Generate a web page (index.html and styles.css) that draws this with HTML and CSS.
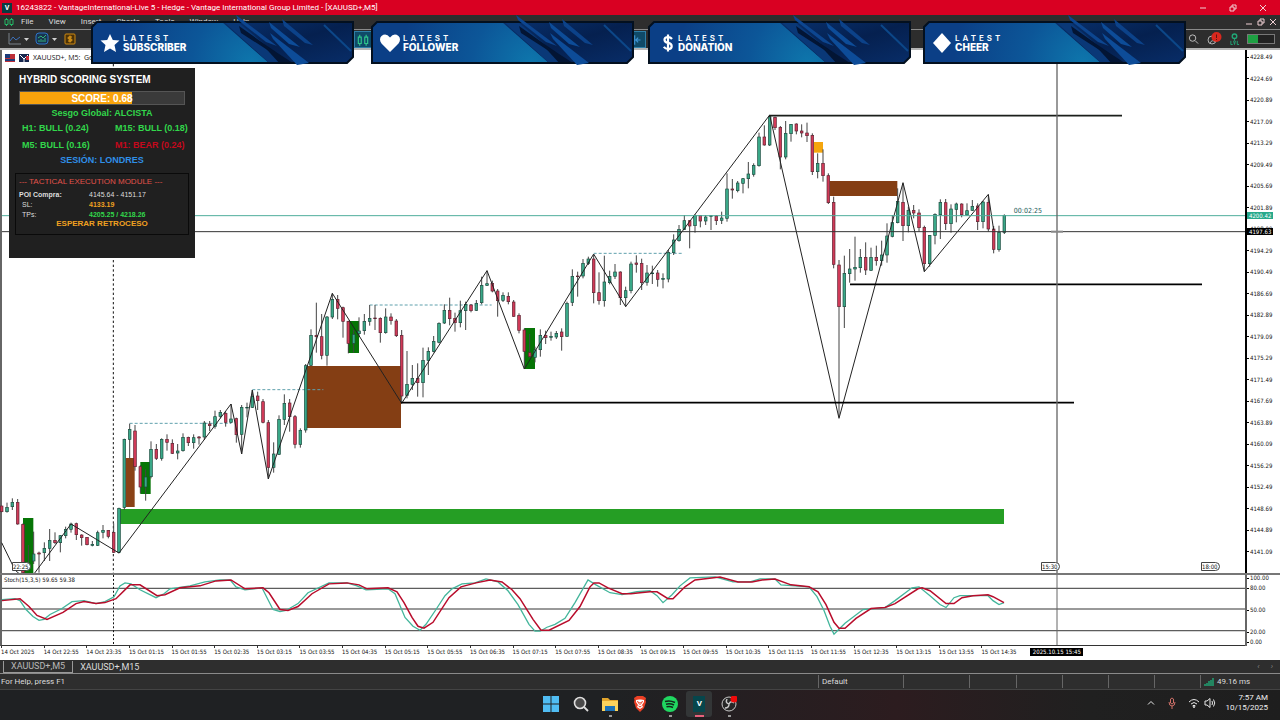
FILE: index.html
```html
<!DOCTYPE html>
<html lang="en">
<head>
    <meta charset="UTF-8">
    <meta name="viewport" content="width=device-width, initial-scale=1.0">
    <title>XAUUSD+,M5</title>
    <link rel="stylesheet" href="styles.css">
</head>
<body>
    <!-- shared shapes -->
    <svg class="defs" aria-hidden="true">
        <defs>
            <radialGradient id="bannerBlue" gradientUnits="userSpaceOnUse" cx="160" cy="48" r="130">
                <stop offset="0" stop-color="#0e76ac"/>
                <stop offset="0.45" stop-color="#0c5698"/>
                <stop offset="1" stop-color="#0b3f86"/>
            </radialGradient>
            <linearGradient id="bannerDark" x1="0" y1="0" x2="1" y2="1">
                <stop offset="0" stop-color="#08306c"/>
                <stop offset="0.5" stop-color="#05204f"/>
                <stop offset="1" stop-color="#082d68"/>
            </linearGradient>
            <clipPath id="bannerClip"><path d="M7 8H261V42L256 47H2V13Z"/></clipPath>
        </defs>
        <symbol id="banner" viewBox="0 0 263 50">
            <path d="M6 7H262V42L256 48H1V12Z" fill="url(#bannerBlue)"/>
            <g clip-path="url(#bannerClip)">
                <path d="M131 7H263V48H178Z" fill="url(#bannerDark)"/>
                <path d="M133 7H147L196 48H178Z" fill="#0a3877"/>
                <path d="M148 11L186 38L178 36L150 18Z" fill="#031534"/>
                <path d="M168 26L205 50H190Z" fill="#031534"/>
                <path d="M233 10L260 36" stroke="#0c4788" stroke-width="2"/>
            </g>
            <path d="M6 7H262V42L256 48H1V12Z" fill="none" stroke="#03101f" stroke-width="2"/>
            <path d="M145 0L186 31L175 27L147 5Z" fill="#0d4690"/>
            <path d="M178 7L209 32L198 29L180 13Z" fill="#0d4c98"/>
            <path d="M191 4L222 30L214 28L193 11Z" fill="#0c4289"/>
            <path d="M179 18L218 48L206 50L182 24Z" fill="#0d4c98"/>
        </symbol>
    </svg>

    <header class="titlebar">
        <span class="app-mark">V</span>
        <h1>16243822 - VantageInternational-Live 5 - Hedge - Vantage International Group Limited - [XAUUSD+,M5]</h1>
        <div class="window-buttons">
            <button aria-label="Minimize"><svg viewBox="0 0 8 8"><path d="M1 4H7"/></svg></button>
            <button aria-label="Restore"><svg viewBox="0 0 8 8"><path d="M1 3H5V7H1ZM3 3V1H7V5H5"/></svg></button>
            <button aria-label="Close"><svg viewBox="0 0 8 8"><path d="M1 1L7 7M7 1L1 7"/></svg></button>
        </div>
    </header>

    <nav class="menubar">
        <svg class="candle-icon" viewBox="0 0 10 10"><path d="M1 2.500H4V7.500H1ZM2.500 1V2.500M2.500 7.500V9M6 2.500H9V7.500H6ZM7.500 1V2.500M7.500 7.500V9"/></svg>
        <button>File</button>
        <button>View</button>
        <button>Insert</button>
        <button>Charts</button>
        <button>Tools</button>
        <button>Window</button>
        <button>Help</button>
        <div class="window-buttons small">
            <button aria-label="Minimize chart"><svg viewBox="0 0 8 8"><path d="M1 6H7"/></svg></button>
            <button aria-label="Restore chart"><svg viewBox="0 0 8 8"><path d="M1 3H5V7H1ZM3 3V1H7V5H5"/></svg></button>
            <button aria-label="Close chart"><svg viewBox="0 0 8 8"><path d="M1 1L7 7M7 1L1 7"/></svg></button>
        </div>
    </nav>

    <div class="toolbar">
        <div class="tools-left">
            <button aria-label="Chart type"><svg class="w20" viewBox="0 0 22 14"><g fill="none"><path d="M2 1V12H14" stroke="#7a828a"/><path d="M3 9L6 5L9 8L13 5" stroke="#3d70b8"/></g><path d="M17 6H22L19.500 9Z" fill="#d0d0d0"/></svg></button>
            <button aria-label="Indicators"><svg class="w20" viewBox="0 0 22 14"><rect x="1" y="1" width="12" height="11" rx="3" fill="#17334f" stroke="#2e74c8"/><path d="M3 6L6 4L8 6L11 3M4 10V8M6 10V7M8 10V8M10 10V6" stroke="#34b37c" fill="none"/><path d="M17 6H22L19.500 9Z" fill="#d0d0d0"/></svg></button>
            <button aria-label="Trade"><svg class="w14" viewBox="0 0 14 14"><rect x="2" y="2" width="10" height="10" rx="1" fill="#4b3208" stroke="#d08a10"/><path d="M9 5H6Q5 5 5 6T6 7H8Q9 7 9 8T8 9H5M7 3.500V10.500" stroke="#f0a51c" fill="none"/></svg></button>
        </div>
        <button class="tool-on on-candles" aria-label="Candlesticks"><svg viewBox="0 0 10 12"><path d="M1 3.500H3.500V9H1ZM2.200 1.500V3.500M2.200 9V11M6.500 3.500H9V9H6.500ZM7.700 1.500V3.500M7.700 9V11" stroke="#2fc58b" fill="none"/></svg></button>
        <button class="tool-on on-shift" aria-label="Chart shift"><svg viewBox="0 0 10 12"><path d="M3 2V10M3 6H8M6 4L4 6L6 8" stroke="#3f94d4" fill="none"/></svg></button>
        <div class="tools-right">
            <button aria-label="Search"><svg viewBox="0 0 12 12"><circle cx="5" cy="5" r="3.500" fill="none" stroke="#c8c8c8"/><path d="M8 8L11 11" stroke="#c8c8c8"/></svg></button>
            <button aria-label="Notifications"><svg class="w16" viewBox="0 0 16 14"><circle cx="6" cy="8" r="4" fill="none" stroke="#b0b0b0"/><path d="M4 11Q6 7 9 10" stroke="#b0b0b0" fill="none"/><circle cx="10.500" cy="5" r="5" fill="#d9281e"/><path d="M10.500 2.500V6M10.500 7V8" stroke="#5d1512"/></svg></button>
            <button aria-label="Level"><svg viewBox="0 0 12 14"><circle cx="6" cy="4" r="2.500" fill="none" stroke="#21a777" stroke-width="1.500"/><path d="M6 6V9M2 9V13H4M5 9L6 13L7 9M9 9V13H11" stroke="#21a777" fill="none"/></svg></button>
            <span class="level"><i></i></span>
        </div>
    </div>

    <main class="workspace">
        <section class="price-row">
            <div class="plot">
                <svg id="price" class="plot-svg" viewBox="0 150 3735 1569" preserveAspectRatio="none"></svg>
                <div class="chart-title">
                    <svg viewBox="0 0 24 8"><path d="M0 0H10V8H0Z" fill="#bd2f38"/><path d="M0 0H5V4H0Z" fill="#1c3b79"/><path d="M0 6H10" stroke="#1c3b79" stroke-width="2"/><path d="M14 0H24V8H14Z" fill="#17264e"/><path d="M15 1L19 5L23 1M19 5V8" stroke="#fff" fill="none"/><path d="M21 2H24V6H21Z" fill="#c82f3a"/></svg>
                    <span>XAUUSD+, M5:&nbsp; Gold vs US Dollar</span>
                </div>
                <span class="countdown">00:02:25</span>
                <span class="flag f1">22:25</span>
                <span class="flag f2">15:30</span>
                <span class="flag f3">18:00</span>

                <aside class="score-panel">
                    <h2>HYBRID SCORING SYSTEM</h2>
                    <div class="score-bar"><div class="score-fill"></div><span>SCORE: 0.68</span></div>
                    <p class="bias">Sesgo Global: ALCISTA</p>
                    <div class="frames">
                        <span>H1: BULL (0.24)</span><span>M15: BULL (0.18)</span>
                        <span>M5: BULL (0.16)</span><span class="bear">M1: BEAR (0.24)</span>
                    </div>
                    <p class="session">SESIÓN: LONDRES</p>
                    <div class="module">
                        <h3>--- TACTICAL EXECUTION MODULE ---</h3>
                        <dl>
                            <dt class="poi">POI Compra:</dt><dd>4145.64 - 4151.17</dd>
                            <dt>SL:</dt><dd class="sl">4133.19</dd>
                            <dt>TPs:</dt><dd class="tp">4205.25 / 4218.26</dd>
                        </dl>
                        <p class="wait">ESPERAR RETROCESO</p>
                    </div>
                </aside>
            </div>
            <div class="price-axis">
                <ol id="priceLabels"></ol>
                <span class="tag bid">4200.42</span>
                <span class="tag cursor">4197.63</span>
            </div>
        </section>

        <section class="stoch-row">
            <div class="plot">
                <svg id="stoch" class="plot-svg" viewBox="0 575 1245 71" preserveAspectRatio="none"></svg>
                <span class="stoch-title">Stoch(15,3,5) 59.65 59.38</span>
            </div>
            <div class="stoch-axis">
                <span class="l100">100.00</span><span class="l80">80.00</span><span class="l50">50.00</span><span class="l20">20.00</span><span class="l0">0.00</span>
            </div>
        </section>

        <div class="time-row">
            <ol id="timeLabels"></ol>
            <span class="time-tag">2025.10.15 15:45</span>
        </div>
    </main>

    <div class="tabs">
        <button class="tab active">XAUUSD+,M5</button>
        <button class="tab">XAUUSD+,M15</button>
        <span class="tab-arrows"><i>‹</i><i>›</i></span>
    </div>

    <footer class="statusbar">
        <span class="help">For Help, press F1</span>
        <span class="cell c1">Default</span>
        <span class="cell c2"></span>
        <span class="cell c3"></span>
        <span class="cell c4"></span>
        <span class="cell c4"></span>
        <span class="cell c4"></span>
        <span class="cell c4"></span>
        <span class="cell c5"><svg viewBox="0 0 10 8"><path d="M1 8V6M3 8V5M5 8V3M7 8V2M9 8V0" stroke="#20a273" stroke-width="1.500"/></svg>49.16 ms</span>
    </footer>

    <div class="taskbar">
        <div class="apps">
            <button aria-label="Start"><svg viewBox="0 0 16 16"><path d="M0 0H7.500V7.500H0ZM8.500 0H16V7.500H8.500ZM0 8.500H7.500V16H0ZM8.500 8.500H16V16H8.500Z" fill="#50bdf3"/></svg></button>
            <button aria-label="Search"><svg viewBox="0 0 16 16"><circle cx="7" cy="7" r="5.500" fill="#4a4a4a" stroke="#dedede" stroke-width="1.600"/><path d="M11 11L15 15" stroke="#dedede" stroke-width="1.800"/></svg></button>
            <button aria-label="Files" class="open"><svg viewBox="0 0 16 16"><path d="M0 2H6L8 4H16V14H0Z" fill="#e2a52c"/><path d="M0 5H16V15H0Z" fill="#fbd25c"/><path d="M3 10H13V15H3Z" fill="#1b72b8"/></svg></button>
            <button aria-label="Brave"><svg viewBox="0 0 16 16"><path d="M5 0H11L14 2L13.500 4L14 6L12 12L8 16L4 12L2 6L2.500 4L2 2Z" fill="#ec4025"/><path d="M4 4L7 3.500H9L12 4L12 6L10 9L11 11L8 13L5 11L6 9L4 6Z" fill="#fff"/><path d="M5 5.500L7 6.500L6.500 7.500M11 5.500L9 6.500L9.500 7.500M8 6V9M6.500 10L8 11L9.500 10" stroke="#ec4025" fill="none"/></svg></button>
            <button aria-label="Music" class="open"><svg viewBox="0 0 16 16"><circle cx="8" cy="8" r="8" fill="#20d761"/><path d="M3 5.500Q8 4 13 6.500M4 8.200Q8 7 12 9M4.500 10.800Q8 9.800 11 11.500" stroke="#12291b" stroke-width="1.500" fill="none"/></svg></button>
            <button aria-label="Vantage" class="current"><span>V</span></button>
            <button aria-label="Recorder" class="open"><svg viewBox="0 0 16 16"><circle cx="8" cy="8" r="7" fill="#262626" stroke="#c9c9c9"/><path d="M8 8Q4 7 6 3M8 8Q10 4 13 7M8 8Q8 12 4 12" stroke="#c9c9c9" stroke-width="1.500" fill="none"/><circle cx="13" cy="3" r="3.500" fill="#f00a0a"/></svg></button>
        </div>
        <div class="tray">
            <svg class="chev" viewBox="0 0 8 8"><path d="M1 5.500L4 2.500L7 5.500" stroke="#e8e8e8" fill="none"/></svg>
            <svg class="mic" viewBox="0 0 8 12"><path d="M2.500 2Q4 0 5.500 2V6Q4 8 2.500 6ZM1 5Q1 9 4 9T7 5M4 9V12" stroke="#cf7068" fill="none"/></svg>
            <svg class="wifi" viewBox="0 0 12 12"><path d="M1 5Q6 0 11 5M3 7Q6 4 9 7M4.500 9Q6 7.500 7.500 9" stroke="#e8e8e8" fill="none"/><circle cx="6" cy="10" r="1" fill="#e8e8e8"/></svg>
            <svg class="vol" viewBox="0 0 12 12"><path d="M1 4H3L6 1.500V10.500L3 8H1ZM8 4Q9 6 8 8M9.500 2.500Q12 6 9.500 9.500" stroke="#e8e8e8" fill="none"/></svg>
            <div class="clock"><time>7:57 AM</time><time>10/15/2025</time></div>
        </div>
    </div>

    <!-- stream overlay -->
    <div class="banners">
        <div class="banner">
            <svg class="bg"><use href="#banner"/></svg>
            <svg class="ic" viewBox="0 0 20 20"><path d="M10 1L12.800 7L19.500 7.600L14.500 12L16 19L10 15.500L4 19L5.500 12L0.500 7.600L7.200 7Z" fill="#fff"/></svg>
            <p><small>LATEST</small><b>SUBSCRIBER</b></p>
        </div>
        <div class="banner">
            <svg class="bg"><use href="#banner"/></svg>
            <svg class="ic" viewBox="0 0 20 20"><path d="M10 19L1.500 10.500Q-1.500 6 1.500 3Q6 -0.500 10 4.500Q14 -0.500 18.500 3Q21.500 6 18.500 10.500Z" fill="#fff"/></svg>
            <p><small>LATEST</small><b>FOLLOWER</b></p>
        </div>
        <div class="banner">
            <svg class="bg"><use href="#banner"/></svg>
            <svg class="ic narrow" viewBox="0 0 10 20"><path d="M9 6Q7.500 4 5 4Q1.500 4 1.500 6.800Q1.500 9.300 5 9.900Q8.700 10.600 8.700 13.200Q8.700 16 5 16Q2 16 0.800 13.800M5 1.500V18.500" stroke="#fff" stroke-width="2.200" fill="none"/></svg>
            <p><small>LATEST</small><b>DONATION</b></p>
        </div>
        <div class="banner">
            <svg class="bg"><use href="#banner"/></svg>
            <svg class="ic" viewBox="0 0 20 20"><path d="M10 0L19 10L10 20L1 10Z" fill="#fff"/></svg>
            <p><small>LATEST</small><b>CHEER</b></p>
        </div>
    </div>

    <script src="chart.js"></script>
</body>
</html>
```

FILE: styles.css
```css
* {
    box-sizing: border-box;
}
body {
    margin: 0;
    min-height: 100vh;
    display: flex;
    flex-direction: column;
    position: relative;
    overflow: hidden;
    background: #2d2d2d;
    color: #dcdcdc;
    font-family: Roboto, "Open Sans", sans-serif;
    font-size: 8px;
    line-height: 10px;
}
h1, h2, h3, p, ol, dl, dd {
    margin: 0;
    padding: 0;
    font-size: inherit;
    font-weight: normal;
}
ol {
    list-style: none;
}
button {
    padding: 0;
    border: 0;
    background: none;
    color: inherit;
    font: inherit;
}
svg {
    display: block;
}
.defs {
    position: absolute;
    width: 0;
    height: 0;
}

/* title and menu */
.titlebar {
    height: 15px;
    display: flex;
    align-items: center;
    background: #d90022;
    color: #fff;
    padding-left: 2px;
}
.app-mark {
    width: 10px;
    height: 10px;
    margin-right: 4px;
    background: #0a3b40;
    text-align: center;
    font-weight: bold;
    font-size: 7px;
}
.window-buttons {
    margin-left: auto;
    display: flex;
    gap: 22px;
    padding-right: 13px;
}
.window-buttons svg {
    width: 8px;
    height: 8px;
    fill: none;
    stroke: #f0d0d4;
}
.window-buttons.small {
    gap: 4px;
    padding-right: 3px;
}
.menubar {
    height: 14px;
    display: flex;
    align-items: center;
    background: #2e2e2e;
}
.menubar > button {
    margin-right: 15px;
}
.candle-icon {
    width: 10px;
    height: 10px;
    margin: 0 7px 0 4px;
    fill: none;
    stroke: #23b866;
}
.toolbar {
    height: 21px;
    display: flex;
    align-items: center;
    background: #2d2d2d;
    border-top: 1px solid #8a8a8a;
    border-bottom: 2px solid #b5b5b5;
    position: relative;
}
.tools-left {
    display: flex;
    gap: 6px;
    padding-left: 7px;
}
.w20 {
    width: 22px;
    height: 14px;
}
.w14 {
    width: 14px;
    height: 14px;
}
.w16 {
    width: 16px;
    height: 14px;
}
.tool-on {
    position: absolute;
    top: 1px;
    width: 18px;
    height: 17px;
    background: #0f4a68;
    border: 1px solid #2f80a8;
}
.tool-on svg {
    width: 12px;
    height: 14px;
    margin: auto;
}
.on-candles {
    left: 354px;
}
.on-shift {
    left: 628px;
}
.tools-right {
    margin-left: auto;
    display: flex;
    align-items: center;
    gap: 7px;
    padding-right: 5px;
}
.tools-right svg {
    height: 14px;
}
.tools-right button:first-child svg,
.tools-right button:nth-child(3) svg {
    width: 11px;
}
.level {
    width: 28px;
    height: 10px;
    border: 1px solid #777;
    background: #222;
}
.level i {
    display: block;
    width: 10px;
    height: 8px;
    background: #1ea043;
}

/* chart */
.workspace {
    flex: 1;
    display: flex;
    flex-direction: column;
    background: #fff;
    color: #111;
    font-family: "DejaVu Sans Condensed", "DejaVu Sans", sans-serif;
    font-size: 6px;
}
.price-row, .stoch-row {
    display: grid;
    grid-template-columns: 1fr 35px;
}
.price-row {
    flex: 1;
}
.plot {
    position: relative;
    border-left: 2px solid #666;
}
.plot-svg {
    position: absolute;
    left: -2px;
    top: 0;
    width: calc(100% + 2px);
    height: 100%;
}
.chart-title {
    position: absolute;
    left: 3px;
    top: 3px;
    display: flex;
    align-items: center;
    gap: 4px;
    font-family: "Open Sans", sans-serif;
    font-size: 7px;
    white-space: nowrap;
}
.chart-title svg {
    width: 24px;
    height: 8px;
}
.countdown {
    position: absolute;
    left: 81.400%;
    top: 156px;
    color: #245c5a;
    font-family: "DejaVu Sans Condensed", sans-serif;
    font-size: 7px;
}
.flag {
    position: absolute;
    bottom: 2px;
    width: 19px;
    height: 9px;
    border: 1px solid #444;
    border-radius: 0 5px 5px 0;
    background: #fff;
    line-height: 7px;
}
.f1 {
    left: 10px;
}
.f2 {
    left: 1039px;
}
.f3 {
    left: 1199px;
}
.price-axis {
    position: relative;
    border-left: 2px solid #000;
    padding: 2px 0 16px;
}
.price-axis ol {
    height: 100%;
    display: flex;
    flex-direction: column;
    justify-content: space-between;
}
.price-axis li, .stoch-axis span {
    display: flex;
    align-items: center;
    gap: 1px;
}
.price-axis li::before, .stoch-axis span::before {
    content: "";
    width: 2px;
    height: 1px;
    background: #000;
}
.tag {
    position: absolute;
    left: 0;
    width: 26px;
    padding-left: 2px;
    height: 7px;
    line-height: 7px;
    color: #fff;
}
.bid {
    top: 162px;
    background: #27a98c;
}
.cursor {
    top: 178px;
    background: #000;
}
.stoch-row {
    height: 73px;
    border-top: 2px solid #777;
}
.stoch-row .plot {
    border-bottom: 1px solid #333;
}
.stoch-title {
    position: absolute;
    left: 2px;
    top: 0;
}
.stoch-axis {
    position: relative;
    border-left: 2px solid #666;
}
.stoch-axis span {
    position: absolute;
    left: 0;
}
.l100 { top: -2px; }
.l80 { top: 8px; }
.l50 { top: 30px; }
.l20 { top: 52px; }
.l0 { top: 62px; }
.time-row {
    height: 14px;
    position: relative;
}
.time-row ol {
    display: flex;
    padding-left: 1px;
}
.time-row li {
    flex: 0 0 calc(100% / 30);
    min-width: 0;
    white-space: nowrap;
}
.time-row li::before {
    content: "";
    display: block;
    width: 1px;
    height: 2px;
    margin-bottom: -1px;
    background: #333;
}
.time-tag {
    position: absolute;
    left: 80.500%;
    top: 2px;
    width: 53px;
    height: 8px;
    background: #000;
    color: #fff;
    text-align: center;
    line-height: 8px;
    white-space: nowrap;
}

/* score panel over the chart */
.score-panel {
    position: absolute;
    left: 7px;
    top: 18px;
    width: 186px;
    height: 190px;
    padding: 7px 6px;
    background: #202020;
    color: #32d74b;
    font-family: "Liberation Sans", sans-serif;
    font-size: 9px;
    font-weight: bold;
    text-align: center;
}
.score-panel h2 {
    padding-left: 4px;
    color: #fff;
    font-size: 10px;
    font-weight: bold;
    text-align: left;
}
.score-bar {
    position: relative;
    height: 14px;
    margin: 6px 4px 3px;
    border: 1px solid #555;
    background: #3a3a3a;
    color: #fff;
    font-size: 10px;
    line-height: 13px;
}
.score-fill {
    position: absolute;
    left: 0;
    top: 0;
    width: 68%;
    height: 100%;
    background: #f9a30c;
}
.score-bar span {
    position: relative;
}
.bias, .session, .wait {
    font-weight: bold;
}
.frames {
    display: grid;
    grid-template-columns: 93px 1fr;
    row-gap: 7px;
    padding: 5px 0 5px 7px;
    text-align: left;
}
.bear {
    color: #c4081c;
}
.session {
    color: #2f8fe8;
}
.module {
    height: 62px;
    margin-top: 8px;
    padding: 3px;
    border: 1px solid #0a0a0a;
    font-size: 7px;
}
.module h3 {
    color: #e0524a;
    font-size: 8px;
    text-align: left;
}
.module dl {
    display: grid;
    grid-template-columns: 70px 1fr;
    padding-top: 3px;
    text-align: left;
}
.module dt {
    padding-left: 3px;
    color: #ddd;
    font-weight: normal;
}
.module .poi {
    padding-left: 0;
    font-weight: bold;
}
.module dd {
    color: #ddd;
    font-weight: normal;
}
.module .sl {
    color: #f0a020;
    font-weight: bold;
}
.module .tp {
    color: #32d74b;
    font-weight: bold;
}
.wait {
    margin-top: -1px;
    color: #f0a020;
    font-size: 8px;
}

/* bottom bars */
.tabs {
    height: 14px;
    display: flex;
    align-items: center;
    padding-left: 3px;
    border-bottom: 1px solid #8a8a8a;
    background: #2e2e2e;
}
.tab {
    height: 12px;
    padding: 0 7px;
    font-size: 9px;
}
.tab.active {
    border: 1px solid #999;
    border-top: 0;
    color: #b8b8b8;
}
.tab-arrows {
    margin-left: auto;
    display: flex;
    gap: 11px;
    padding-right: 7px;
    color: #888;
}
.statusbar {
    height: 16px;
    display: flex;
    align-items: center;
    background: #2e2e2e;
    border-bottom: 1px solid #444;
}
.help {
    flex: 1;
    padding-left: 1px;
}
.cell {
    height: 13px;
    padding-left: 3px;
    border-left: 1px solid #666;
    display: flex;
    align-items: center;
    gap: 3px;
}
.cell svg {
    width: 10px;
    height: 8px;
}
.c1 { width: 85px; }
.c2 { width: 66px; }
.c3 { width: 47px; }
.c4 { width: 46px; }
.c5 { width: 80px; }
.taskbar {
    height: 30px;
    position: relative;
    display: flex;
    justify-content: center;
    background: linear-gradient(90deg, #1f2123, #1f2123 48%, #2c1c1f 70%, #202020 85%, #1e1e1e);
}
.apps {
    width: 204px;
    display: flex;
    justify-content: space-between;
}
.apps button {
    position: relative;
    width: 26px;
    height: 26px;
    margin-top: 1px;
    border-radius: 3px;
}
.apps svg, .current span {
    width: 16px;
    height: 16px;
    margin: auto;
}
.open::after, .current::after {
    content: "";
    position: absolute;
    left: 12px;
    bottom: 0;
    width: 3px;
    height: 2px;
    background: #999;
}
.current {
    background: #333637;
}
.current span {
    display: block;
    width: 12px;
    background: #06464c;
    color: #fff;
    font-weight: bold;
    line-height: 16px;
}
.current::after {
    left: 9px;
    width: 9px;
    background: #e8617b;
}
.tray {
    position: absolute;
    right: 12px;
    top: 3px;
    display: flex;
    align-items: center;
    color: #f0f0f0;
}
.chev {
    width: 8px;
    height: 8px;
    margin-right: 13px;
}
.mic {
    width: 8px;
    height: 12px;
    margin-right: 12px;
}
.wifi, .vol {
    width: 12px;
    height: 12px;
    margin-right: 4px;
}
.clock {
    width: 48px;
    display: flex;
    flex-direction: column;
    text-align: right;
}

/* stream overlay */
.banners {
    position: absolute;
    left: 91px;
    top: 15px;
    display: grid;
    grid-template-columns: 280px 277px 275px 263px;
}
.banner {
    position: relative;
    width: 263px;
    height: 50px;
    display: flex;
    align-items: center;
    gap: 3px;
    padding: 5px 0 0 9px;
    color: #fff;
    font-family: Inter, sans-serif;
}
.bg {
    position: absolute;
    left: 0;
    top: 0;
    width: 100%;
    height: 100%;
}
.ic {
    position: relative;
    width: 20px;
    height: 20px;
}
.ic.narrow {
    width: 10px;
    margin: 0 2px 0 6px;
}
.banner p {
    position: relative;
    display: flex;
    flex-direction: column;
}
.banner small {
    font-size: 8px;
    font-weight: 600;
    line-height: 8px;
    letter-spacing: 3px;
}
.banner b {
    font-size: 10px;
    font-weight: 800;
    line-height: 10px;
}
```

FILE: chart.js
```javascript
const NS = 'http://www.w3.org/2000/svg';
const price = document.getElementById('price');
const stoch = document.getElementById('stoch');

function add(parent, name, attrs) {
    const el = document.createElementNS(NS, name);
    for (const key in attrs) {
        el.setAttribute(key, attrs[key]);
    }
    parent.appendChild(el);
}

function line(parent, x1, y1, x2, y2, color, width, dash) {
    add(parent, 'path', {
        d: `M${x1} ${y1}L${x2} ${y2}`, stroke: color, 'stroke-width': width,
        fill: 'none', 'stroke-dasharray': dash || 'none'
    });
}

// zones: x, y, right, bottom, color
const zones = [
    [69, 1554, 100, 1719, '#067506'],
    [360, 1527, 3012, 1572, '#259e24'],
    [378, 1374, 404, 1521, '#8a4216'],
    [421, 1386, 452, 1482, '#067506'],
    [921, 1098, 1203, 1284, '#843e14'],
    [1044, 963, 1077, 1059, '#067506'],
    [1573, 984, 1605, 1107, '#067506'],
    [2442, 426, 2469, 458, '#f5a60e'],
    [2489, 543, 2692, 588, '#843e14']
];

// high, body top, body bottom, low, direction (u/d), measured from the base
const segments = [
    { base: 1140, rows: `378 378 395 397 d|368 382 395 398 u|355 367 380 390 u|357 367 432 434 d|430 433 578 578 d|495 550 552 570 u|455 522 543 552 u|515 519 522 578 d|487 505 518 543 u|447 481 505 543 u|457 481 488 492 d|465 467 488 517 u|440 448 467 475 u|428 432 448 458 u|428 431 464 480 d|463 465 473 497 d|471 472 494 496 d|483 493 496 499 u|452 458 496 498 u|435 451 457 475 u|450 451 469 475 d|430 457 517 519 d|383 385 517 520 u|176 178 382 390 u|131 148 178 235 u|135 153 260 272 d|255 260 321 340 d|268 291 321 362 u|184 208 290 295 u|192 208 235 240 d|175 178 235 242 u|163 178 187 212 d|178 190 220 222 d|192 213 219 238 u|160 172 212 215 u|170 172 188 198 d|163 173 188 206 u|168 171 174 194 d|123 129 171 180 u|123 132 137 153 d|92 110 139 146 u|90 97 109 115 u|94 100 127 140 d|72 117 127 130 u|113 116 164 188 d|75 82 163 222 u|68 82 84 112 u|30 50 82 84 u|35 48 62 90 d|57 65 127 130 d|120 128 262 297 d|187 222 262 278 u|106 118 223 225 u|43 70 118 135 u|57 69 110 155 d|105 110 193 205 d|145 151 193 203 u` },
    { base: 720, rows: `372 377 570 578 u|268 286 376 378 u|188 286 290 338 d|222 290 346 358 d|228 231 346 377 u|160 178 231 237 u|165 178 205 238 d|200 203 244 293 d|242 244 310 340 d|270 283 310 338 u|232 273 281 290 u|222 244 272 284 u|195 235 244 257 u|195 234 236 270 d|232 235 278 308 d|205 231 278 281 u|220 231 242 254 d|237 243 287 291 d|270 286 468 490 d|333 433 466 475 u|375 415 433 450 u|370 415 428 470 d|323 361 428 472 u|322 334 361 405 u|288 304 334 337 u|247 250 307 310 u|193 211 249 252 u|173 211 236 256 d|218 235 248 275 d|182 212 248 262 u|185 193 212 270 u|192 195 212 217 d|180 190 211 213 u|110 136 188 193 u|92 131 136 138 u|122 130 153 157 d|147 153 182 230 d|157 166 181 186 u|157 169 185 193 d|180 186 229 230 d|220 226 271 280 d|265 270 334 387 d|282 338 350 353 d|320 330 352 367 u|268 286 329 350 u|272 286 293 312 d|275 289 292 302 u|273 280 291 297 u|265 276 290 332 d|185 190 289 290 u|88 109 187 198 u|95 108 110 170 d|57 70 108 115 u|50 57 70 75 u|45 57 158 190 d` },
    { base: 300, rows: `517 578 602 614 d|467 546 602 620 u|512 529 548 553 u|492 516 529 537 u|514 516 593 615 d|560 572 593 620 u|485 492 572 580 u|466 489 493 518 d|476 490 548 570 d|495 519 547 557 u|497 519 521 552 u|510 519 538 560 d|520 535 538 565 u|450 457 537 547 u|403 420 458 465 u|375 388 422 425 u|345 362 388 390 u|360 362 378 445 d|343 346 377 398 u|345 346 363 382 d|345 351 363 375 u|345 347 349 390 u|345 348 362 375 d|335 354 361 372 u|220 267 355 365 u|237 267 270 296 d|243 249 272 277 u|234 236 250 280 u|186 222 236 265 u|190 196 223 230 u|98 111 197 200 u|76 111 135 137 d|45 50 135 138 u|50 52 83 90 d|78 82 171 208 d|63 100 171 178 u|72 73 101 125 u|70 72 93 103 d|73 93 99 112 d|68 99 107 126 d|100 106 215 225 d|160 190 215 235 u|148 190 227 245 d|220 227 308 312 d|290 307 493 505 d|480 495 620 950 d|467 520 620 684 u|447 507 521 548 u|410 502 507 542 u|447 472 503 518 u|427 472 510 525 d|443 472 511 512 u|437 472 482 497 d|422 465 482 497 u|370 408 465 488 u|345 368 409 412 u|265 304 368 370 u|250 307 377 423 d|320 331 377 397 u|315 331 339 355 d|328 339 383 395 d|377 382 491 515 d|405 406 491 500 u|340 343 406 433 u|298 307 344 417 u|297 308 371 390 d|313 327 371 398 u|308 312 328 367 u|310 312 344 352 d|310 332 345 347 u|300 319 331 333 u|310 318 365 390 d|303 306 365 385 u|285 307 387 395 d|378 387 448 460 d|377 397 449 455 u|343 346 397 402 u` }
];

const zigzag = '5,1628 45,1710 85,1745 104,1719 213,1572 357,1659 693,1212 725,1362 757,1170 805,1437 997,880 1205,1210 1461,812 1573,1107 1781,762 1877,920 2309,345 2517,1255 2709,548 2773,815 2965,583 2981,690';

zones.forEach(([x, y, r, b, fill]) => add(price, 'rect', { x, y, width: r - x, height: b - y, fill }));

// day separator
line(price, 340, 150, 340, 1719, '#111', 3, '7 7');

// swing high levels
line(price, 389, 1270, 693, 1270, '#5fa0ac', 3, '9 6');
line(price, 757, 1169, 970, 1169, '#5fa0ac', 3, '9 6');
line(price, 1109, 915, 1475, 915, '#5fa0ac', 3, '9 6');
line(price, 1781, 760, 2050, 760, '#5fa0ac', 3, '9 6');

// candles
let index = 0;
segments.forEach(({ base, rows }) => {
    rows.split('|').forEach(row => {
        const [h, t, b, l, dir] = row.split(' ');
        const x = 5 + 16 * index++;
        line(price, x, base + +h, x, base + +l, '#444', 3);
        add(price, 'rect', {
            x: x - 4, y: base + +t, width: 8, height: Math.max(1, b - t),
            fill: dir === 'u' ? '#3aa888' : '#d03a58',
            stroke: dir === 'u' ? '#1c4a3e' : '#5c2432', 'stroke-width': 2
        });
    });
});

add(price, 'polyline', { points: zigzag, fill: 'none', stroke: '#222', 'stroke-width': 3 });

// levels and cursor
line(price, 2307, 347, 3366, 347, '#1b1f1b', 5);
line(price, 2550, 853, 3606, 853, '#000', 5);
line(price, 1203, 1208, 3222, 1208, '#000', 5);
line(price, 6, 647, 3735, 647, '#4fae9c', 3);
line(price, 6, 695, 3735, 695, '#333', 3);
line(price, 3171, 150, 3171, 1719, '#666', 4);
line(price, 3153, 695, 3189, 695, '#888', 6);

// stochastic
const main = '2,600 15,599 20,601 26,610 33,617 39,621 44,620 50,615 62,609 72,602 84,601 96,604 105,602 114,597 120,586 125,583 131,584 140,590 156,598 164,594 170,589 190,586 205,582 220,580 230,580 236,587 245,590 262,588 266,596 273,610 280,612 286,611 298,604 308,593 329,583 347,583 357,586 366,590 388,589 395,594 405,618 413,627 420,631 426,625 436,610 445,596 452,589 462,584 475,583 486,579 498,582 508,591 518,605 529,625 535,632 540,632 547,628 555,625 565,619 575,603 588,580 596,585 610,593 622,595 637,592 650,591 657,596 663,603 672,595 680,586 690,578 715,577 733,582 750,582 760,579 775,579 781,585 809,587 817,597 824,611 830,627 834,635 845,624 863,610 885,608 895,601 912,588 919,587 930,596 940,605 946,608 954,598 960,596 988,596 993,601 999,605 1004,603';
const signal = '2,601 20,599 29,607 37,616 47,620 63,613 76,604 84,602 96,604 105,603 116,599 130,585 140,585 157,596 165,595 180,588 200,586 216,581 231,580 245,589 263,588 269,593 280,610 288,611 298,607 312,594 329,584 347,583 359,585 367,589 388,588 397,592 404,603 412,618 418,627 424,629 433,623 449,598 461,587 476,583 490,580 502,582 512,590 520,599 533,620 541,631 549,631 569,621 580,607 590,587 594,583 599,583 608,588 622,594 631,594 640,593 650,592 657,592 668,599 673,599 685,587 695,580 720,577 738,582 752,582 762,580 775,579 791,585 809,587 818,592 826,605 834,623 839,629 845,629 856,619 871,609 885,608 895,604 918,589 922,588 930,591 946,604 954,604 962,598 973,596 988,595 993,597 1004,603';
[588.5, 609.5, 631.5].forEach(y => line(stoch, 2, y, 1245, y, '#333', 1));
line(stoch, 113.5, 575, 113.5, 646, '#111', 1, '2 2');
add(stoch, 'polyline', { points: main, fill: 'none', stroke: '#43b59b', 'stroke-width': 1.3 });
add(stoch, 'polyline', { points: signal, fill: 'none', stroke: '#b80c2b', 'stroke-width': 1.5 });
line(stoch, 1057, 575, 1057, 646, '#666', 1);

// axis labels
const priceLabels = document.getElementById('priceLabels');
for (let i = 0; i < 24; i++) {
    const li = document.createElement('li');
    li.textContent = (4228.49 - i * 3.8).toFixed(2);
    priceLabels.appendChild(li);
}

const times = ['14 Oct 2025', '14 Oct 22:55', '14 Oct 23:35'];
for (let m = 75; m <= 875; m += 40) {
    const hh = String(Math.floor(m / 60)).padStart(2, '0');
    const mm = String(m % 60).padStart(2, '0');
    times.push(`15 Oct ${hh}:${mm}`);
}
const timeLabels = document.getElementById('timeLabels');
times.forEach(text => {
    const li = document.createElement('li');
    li.textContent = text;
    timeLabels.appendChild(li);
});
```
